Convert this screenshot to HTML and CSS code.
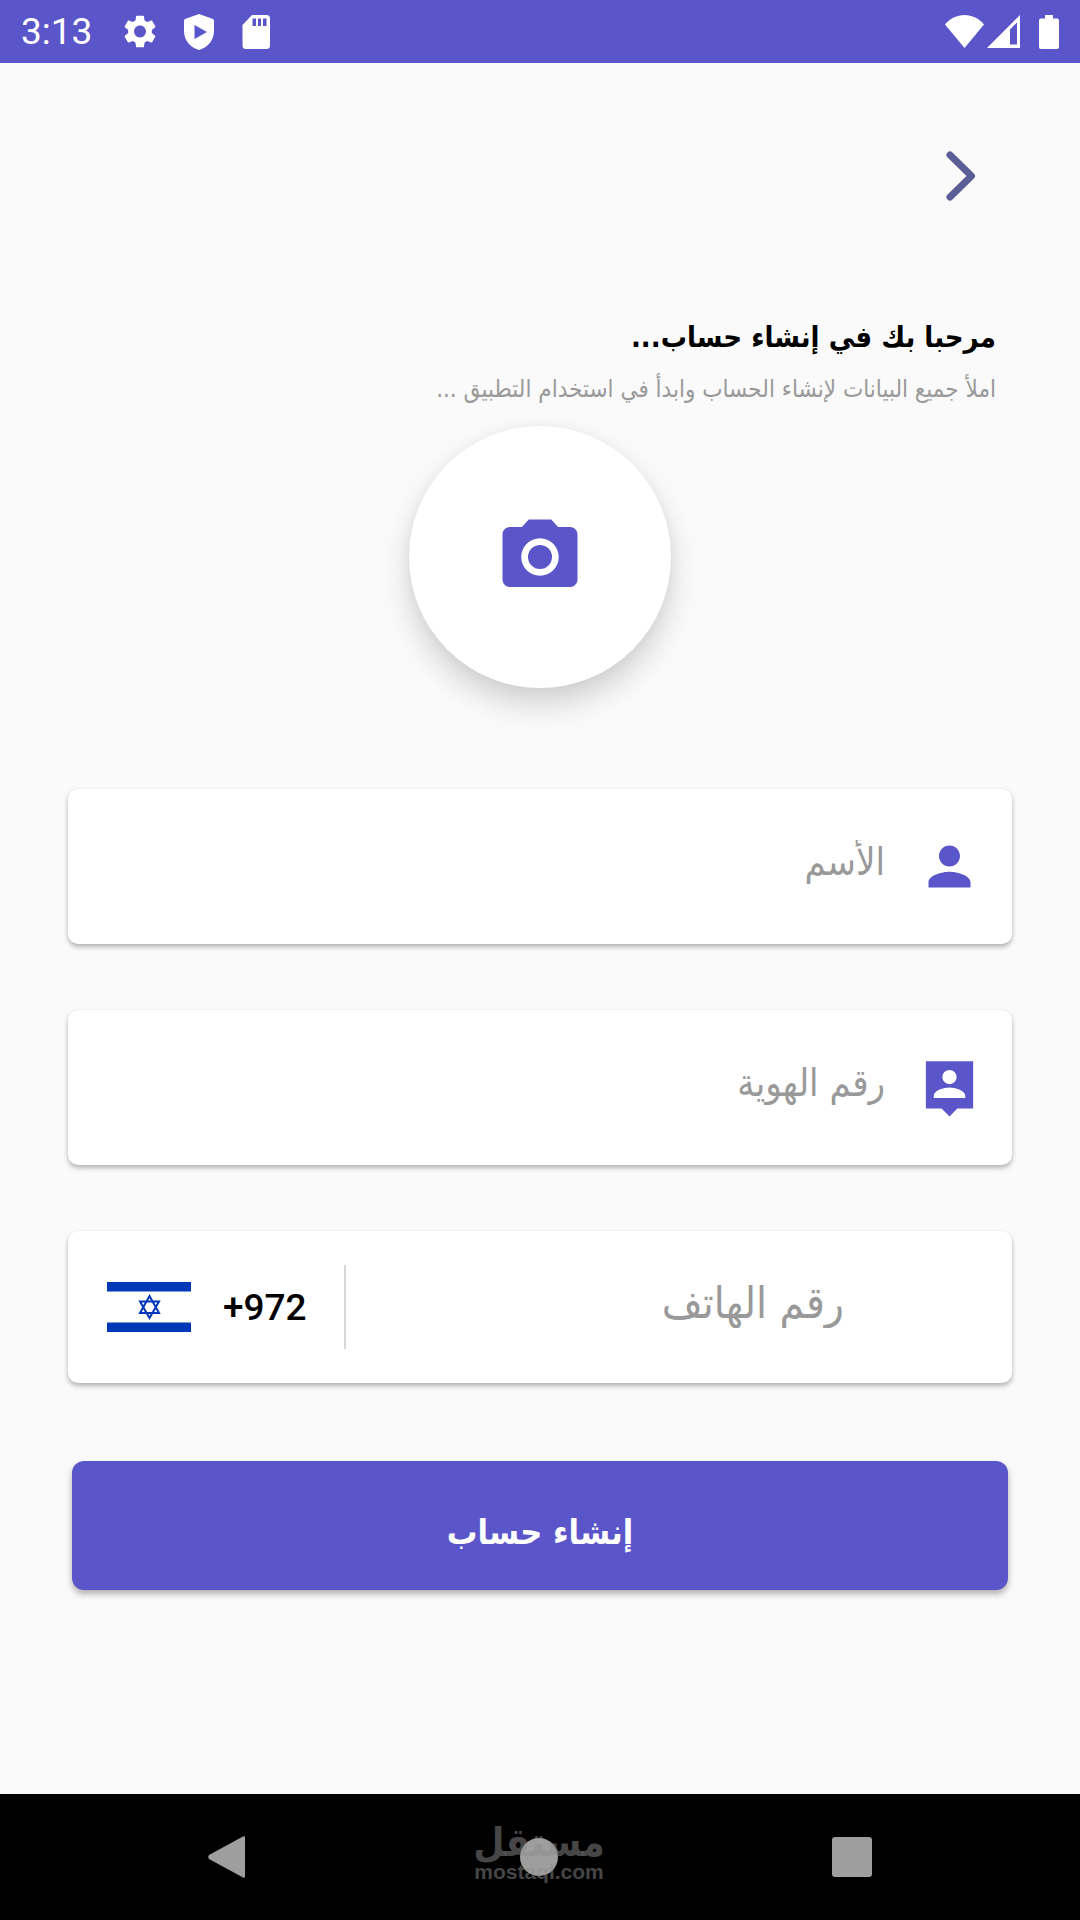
FILE: index.html
```html
<!DOCTYPE html>
<html lang="ar" dir="rtl">
<head>
  <meta charset="UTF-8" />
  <meta name="viewport" content="width=device-width, initial-scale=1.0"/>
  <title>إنشاء حساب</title>
  <link rel="stylesheet" href="styles.css">
</head>
<body>
  <header class="status-bar" dir="ltr">
    <div class="status-left">
      <span class="clock">3:13</span>
      <svg width="32" height="33" viewBox="2.400 2 19.200 20" fill="#fff"><path d="M19.14 12.94c.04-.3.06-.61.06-.94 0-.32-.02-.64-.07-.94l2.03-1.58a.49.49 0 0 0 .12-.61l-1.92-3.32a.488.488 0 0 0-.59-.22l-2.39.96c-.5-.38-1.03-.7-1.62-.94l-.36-2.54a.484.484 0 0 0-.48-.41h-3.84c-.24 0-.43.17-.47.41l-.36 2.54c-.59.24-1.13.57-1.62.94l-2.39-.96c-.22-.08-.47 0-.59.22L2.74 8.87c-.12.21-.08.47.12.61l2.03 1.58c-.05.3-.09.63-.09.94s.02.64.07.94l-2.03 1.58a.49.49 0 0 0-.12.61l1.92 3.32c.12.22.37.29.59.22l2.39-.96c.5.38 1.03.7 1.62.94l.36 2.54c.05.24.24.41.48.41h3.84c.24 0 .44-.17.47-.41l.36-2.54c.59-.24 1.13-.56 1.62-.94l2.39.96c.22.08.47 0 .59-.22l1.92-3.32c.12-.22.07-.47-.12-.61l-2.01-1.58zM12 15.6c-1.98 0-3.6-1.62-3.6-3.6s1.62-3.6 3.6-3.6 3.6 1.62 3.6 3.6-1.62 3.6-3.6 3.6z"/></svg>
      <svg width="30" height="36" viewBox="0 0 30 36" fill="#fff" fill-rule="evenodd"><path d="M15 0 29 5Q30 5.500 30 7V17C30 26 24 33.500 15 36 6 33.500 0 26 0 17V7Q0 5.500 1 5ZM10.500 11V25L23 18Z"/></svg>
      <svg width="28" height="34" viewBox="0 0 28 34" fill="#fff" fill-rule="evenodd"><path d="M10 0H24.500Q28 0 28 3.500V30.500Q28 34 24.500 34H4Q.5 34 .5 30.500V10ZM10.500 3.500V11H14V3.500ZM16 3.500V11H19V3.500ZM21 3.500V11H24.500V3.500Z"/></svg>
    </div>
    <div class="status-right">
      <svg width="39" height="33" viewBox="0 0 39 33" fill="#fff"><path d="M19.500 33 0 9.500C5 3.500 12 0 19.500 0S34 3.500 39 9.500Z"/></svg>
      <svg width="33" height="33" viewBox="0 0 33 33" fill="#fff" fill-rule="evenodd"><path d="M33 0V33H0ZM30 7.500 23 14.500V29.500H30Z"/></svg>
      <svg class="battery" width="20" height="34" viewBox="0 0 20 34" fill="#fff"><path d="M6 0H14V3.500H18Q20 3.500 20 5.500V32Q20 34 18 34H2Q0 34 0 32V5.500Q0 3.500 2 3.500H6Z"/></svg>
    </div>
  </header>

  <main class="page">
    <button class="back" type="button" aria-label="رجوع">
      <svg width="30" height="50" viewBox="0 0 30 50" fill="none" stroke="#5c5c96" stroke-width="7" stroke-linecap="round" stroke-linejoin="round"><path d="M4 4 25.500 25 4 46"/></svg>
    </button>

    <div class="intro">
      <h1>مرحبا بك في إنشاء حساب...</h1>
      <p>املأ جميع البيانات لإنشاء الحساب وابدأ في استخدام التطبيق ...</p>
    </div>

    <form class="signup">
      <button class="photo" type="button" aria-label="صورة">
        <svg width="90" height="90" viewBox="0 0 24 24" fill="#5b55ca"><circle cx="12" cy="12" r="3.200"/><path d="M9 2 7.170 4H4c-1.100 0-2 .9-2 2v12c0 1.100.9 2 2 2h16c1.100 0 2-.9 2-2V6c0-1.100-.9-2-2-2h-3.170L15 2H9zm3 15c-2.760 0-5-2.240-5-5s2.240-5 5-5 5 2.240 5 5-2.240 5-5 5z"/></svg>
      </button>

      <div class="field">
        <label for="name" aria-label="الأسم">
          <svg width="63" height="63" viewBox="0 0 24 24" fill="#5b55ca"><path d="M12 12c2.210 0 4-1.790 4-4s-1.790-4-4-4-4 1.790-4 4 1.790 4 4 4zm0 2c-2.670 0-8 1.340-8 4v2h16v-2c0-2.660-5.330-4-8-4z"/></svg>
        </label>
        <input type="text" id="name" placeholder="الأسم" />
      </div>

      <div class="field">
        <label for="id-number" aria-label="رقم الهوية">
          <svg width="63" height="63" viewBox="0 0 24 24" fill="#5b55ca"><path d="M21 2H3v18h6l3 3 3-3h6V2zm-9 3.300c1.490 0 2.700 1.210 2.700 2.700s-1.210 2.700-2.700 2.700S9.300 9.490 9.300 8s1.210-2.700 2.700-2.700zM18 16H6v-.9c0-2 4-3.100 6-3.100s6 1.100 6 3.100v.9z"/></svg>
        </label>
        <input type="text" id="id-number" placeholder="رقم الهوية" />
      </div>

      <div class="field phone">
        <input type="tel" id="phone" placeholder="رقم الهاتف" aria-label="رقم الهاتف" dir="rtl" />
        <button class="country" type="button" dir="ltr">
          <svg width="84" height="50" viewBox="0 0 84 50"><path fill="#fff" d="M0 0H84V50H0Z"/><path fill="#0038b8" d="M0 0H84V9.500H0ZM0 40.500H84V50H0Z"/><path fill="none" stroke="#0038b8" stroke-width="2" d="M42.500 14 52 31H33ZM42.500 36 33 19.500H52Z"/></svg>
          <span>+972</span>
        </button>
      </div>

      <button class="submit" type="submit">إنشاء حساب</button>
    </form>
  </main>

  <nav class="nav-bar" dir="ltr">
    <button type="button" aria-label="Back">
      <svg width="38" height="42" viewBox="0 0 38 42" fill="#9e9e9e"><path d="M37 1V41Q37 42 35 41.500L1 23Q-.5 21 1 19L35 .5Q37 0 37 1Z"/></svg>
    </button>
    <button class="home" type="button" aria-label="Home">
      <svg width="38" height="38" viewBox="0 0 38 38" fill="#9e9e9e"><circle cx="19" cy="19" r="19"/></svg>
      <span class="watermark">
        <span class="mark-ar">مستقل</span>
        <span class="mark-en">mostaql.com</span>
      </span>
    </button>
    <button type="button" aria-label="Recent">
      <svg width="40" height="40" viewBox="0 0 40 40" fill="#9e9e9e"><rect width="40" height="40" rx="3"/></svg>
    </button>
  </nav>
</body>
</html>
```
FILE: styles.css
```css
* {
  box-sizing: border-box;
}

body {
  background-color: #fafafa;
  color: #000;
  font-family: 'DejaVu Sans Condensed', 'DejaVu Sans', sans-serif;
  margin: 0;
  min-height: 100vh;
  display: flex;
  flex-direction: column;
}

svg {
  display: block;
  flex: none;
}

button {
  border: none;
  background: none;
  padding: 0;
  font-family: inherit;
  cursor: pointer;
}

.status-bar {
  display: flex;
  justify-content: space-between;
  align-items: center;
  height: 63px;
  padding: 0 21px;
  background-color: #5b55ca;
  color: #fff;
}

.status-left {
  display: flex;
  align-items: center;
  gap: 28px;
}

.status-right {
  display: flex;
  align-items: center;
  gap: 3px;
}

.battery {
  margin-left: 16px;
}

.clock {
  margin-right: 4px;
  font-family: Roboto, sans-serif;
  font-size: 37px;
}

.page {
  flex: 1;
  padding: 72px 68px 0;
}

.back {
  display: block;
  padding: 16px 36px;
}

.intro {
  margin-top: 94px;
  padding: 0 16px;
}

.intro h1 {
  margin: 0;
  font-size: 29px;
  line-height: 52px;
}

.intro p {
  margin: 0;
  font-size: 24px;
  line-height: 52px;
  color: #999;
}

.signup {
  display: flex;
  flex-direction: column;
  gap: 66px;
  margin-top: 11px;
}

.photo {
  display: flex;
  align-items: center;
  justify-content: center;
  align-self: center;
  width: 262px;
  height: 262px;
  margin-bottom: 35px;
  border-radius: 50%;
  background-color: #fff;
  box-shadow: 0 16px 30px rgba(0, 0, 0, 0.17), 0 0 12px rgba(0, 0, 0, 0.04);
}

.field {
  display: flex;
  align-items: center;
  gap: 33px;
  height: 155px;
  padding: 0 31px;
  border-radius: 10px;
  background-color: #fff;
  box-shadow: 0 3px 5px rgba(0, 0, 0, 0.28), 0 0 2px rgba(0, 0, 0, 0.06);
}

.field input {
  flex: 1;
  min-width: 0;
  height: 100px;
  padding: 0 0 10px;
  border: none;
  outline: none;
  background: none;
  font-family: inherit;
  font-size: 38px;
  line-height: 80px;
}

.field input::placeholder {
  color: #999;
  opacity: 1;
  line-height: 80px;
}

.phone {
  height: 152px;
  padding: 0 168px 0 39px;
}

.phone input {
  font-size: 44px;
}

.country {
  display: flex;
  align-items: center;
  gap: 32px;
  height: 84px;
  padding-right: 37px;
  border-right: 2px solid #d6d6d6;
  font-family: Roboto, sans-serif;
  font-size: 37px;
  font-weight: 500;
  color: #000;
}

.submit {
  height: 129px;
  margin: 12px 4px 0;
  padding-top: 12px;
  border-radius: 12px;
  background-color: #5b55ca;
  color: #fff;
  font-size: 34px;
  font-weight: bold;
  box-shadow: 0 4px 6px rgba(0, 0, 0, 0.3);
}

.nav-bar {
  display: flex;
  align-items: center;
  justify-content: space-between;
  height: 126px;
  padding: 0 208px;
  background-color: #000;
}

.home {
  position: relative;
}

/* sits over the home button */
.watermark {
  position: absolute;
  left: 50%;
  bottom: -8px;
  transform: translateX(-50%);
  display: flex;
  flex-direction: column;
  align-items: center;
  color: rgba(140, 140, 140, 0.5);
  font-weight: bold;
}

.mark-ar {
  font-size: 40px;
  line-height: 36px;
}

.mark-en {
  font-family: 'Liberation Sans', Arial, sans-serif;
  font-size: 21px;
  line-height: 24px;
}
```
